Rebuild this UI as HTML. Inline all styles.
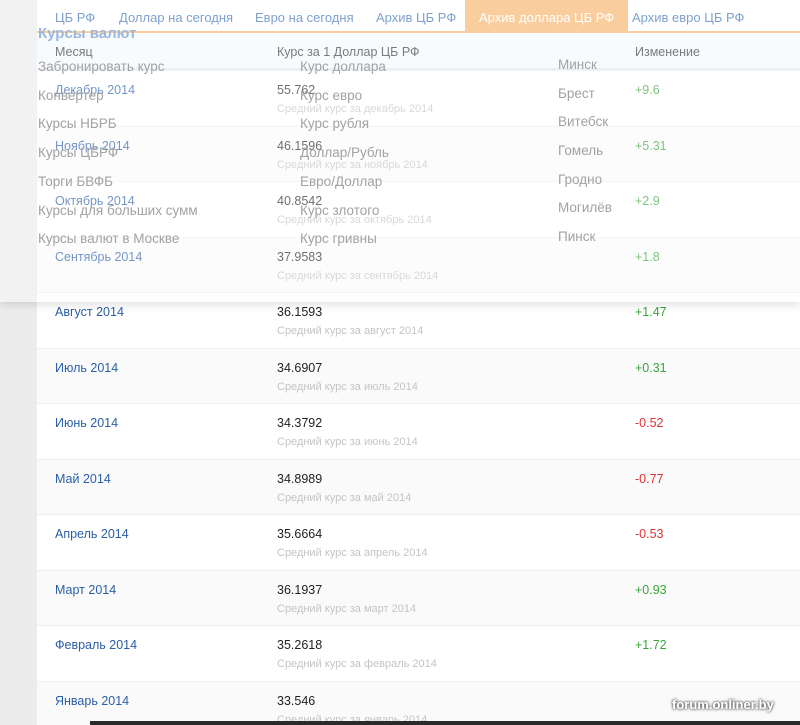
<!DOCTYPE html>
<html><head><meta charset="utf-8"><style>
*{margin:0;padding:0;box-sizing:border-box}
html,body{width:800px;height:725px;overflow:hidden}
body{background:#ececec;font-family:"Liberation Sans","Noto Sans CJK SC",sans-serif;position:relative}
.main{position:absolute;left:37px;top:0;width:763px;height:725px;background:#fff}
.tabs{position:absolute;left:0;top:0;width:763px;height:33px;border-bottom:2px solid #f7b36b}
.tab{position:absolute;top:10px;font-size:13px;color:#3a6db5}
.tab.act{top:0;height:33px;background:#f7b36b;color:#fff;padding:10px 14px 0}
.head{position:absolute;left:0;top:34px;width:763px;height:36px;background:#f5f9fd;border-bottom:2px solid #dde6f2;font-size:12.5px;color:#333}
.head span{position:absolute;top:11px}
.row{position:absolute;left:0;width:763px;height:55.5px;border-top:1px solid #eee;font-size:12.5px}
.row.alt{background:#fafafa}
.m{position:absolute;left:18px;top:12px;color:#2a5ea8}
.v{position:absolute;left:240px;top:12px;color:#222}
.s{position:absolute;left:240px;top:32px;color:#c4c4c4;font-size:11px}
.c{position:absolute;left:598px;top:12px}
.g{color:#3aa53a}.r{color:#d33}
.ov{position:absolute;left:0;top:0;width:800px;height:302px;background:rgba(255,255,255,.35);box-shadow:0 3px 8px rgba(0,0,0,.12)}
.ov div{position:absolute;font-size:13.5px;color:#a2a2a2}
.bar{position:absolute;left:90px;top:721px;width:710px;height:4px;background:#2a2a2a}
.wm{position:absolute;left:672px;top:697px;color:#fff;font-weight:bold;font-size:13px;text-shadow:0 0 3px #555,0 0 2px #555}
</style></head><body>
<div class="main">
<div class="tabs">
<span class="tab" style="left:18px">ЦБ РФ</span>
<span class="tab" style="left:82px">Доллар на сегодня</span>
<span class="tab" style="left:218px">Евро на сегодня</span>
<span class="tab" style="left:339px">Архив ЦБ РФ</span>
<span class="tab act" style="left:428px">Архив доллара ЦБ РФ</span>
<span class="tab" style="left:595px">Архив евро ЦБ РФ</span>
</div>
<div class="head"><span style="left:18px">Месяц</span><span style="left:240px">Курс за 1 Доллар ЦБ РФ</span><span style="left:598px">Изменение</span></div>
<div class="row" style="top:70px"><span class="m">Декабрь 2014</span><span class="v">55.762</span><span class="s">Средний курс за декабрь 2014</span><span class="c g">+9.6</span></div>
<div class="row alt" style="top:125.5px"><span class="m">Ноябрь 2014</span><span class="v">46.1596</span><span class="s">Средний курс за ноябрь 2014</span><span class="c g">+5.31</span></div>
<div class="row" style="top:181px"><span class="m">Октябрь 2014</span><span class="v">40.8542</span><span class="s">Средний курс за октябрь 2014</span><span class="c g">+2.9</span></div>
<div class="row alt" style="top:236.5px"><span class="m">Сентябрь 2014</span><span class="v">37.9583</span><span class="s">Средний курс за сентябрь 2014</span><span class="c g">+1.8</span></div>
<div class="row" style="top:292px"><span class="m">Август 2014</span><span class="v">36.1593</span><span class="s">Средний курс за август 2014</span><span class="c g">+1.47</span></div>
<div class="row alt" style="top:347.5px"><span class="m">Июль 2014</span><span class="v">34.6907</span><span class="s">Средний курс за июль 2014</span><span class="c g">+0.31</span></div>
<div class="row" style="top:403px"><span class="m">Июнь 2014</span><span class="v">34.3792</span><span class="s">Средний курс за июнь 2014</span><span class="c r">-0.52</span></div>
<div class="row alt" style="top:458.5px"><span class="m">Май 2014</span><span class="v">34.8989</span><span class="s">Средний курс за май 2014</span><span class="c r">-0.77</span></div>
<div class="row" style="top:514px"><span class="m">Апрель 2014</span><span class="v">35.6664</span><span class="s">Средний курс за апрель 2014</span><span class="c r">-0.53</span></div>
<div class="row alt" style="top:569.5px"><span class="m">Март 2014</span><span class="v">36.1937</span><span class="s">Средний курс за март 2014</span><span class="c g">+0.93</span></div>
<div class="row" style="top:625px"><span class="m">Февраль 2014</span><span class="v">35.2618</span><span class="s">Средний курс за февраль 2014</span><span class="c g">+1.72</span></div>
<div class="row alt" style="top:680.5px"><span class="m">Январь 2014</span><span class="v">33.546</span><span class="s">Средний курс за январь 2014</span></div>
</div>
<div class="ov">
<div style="left:38px;top:25px;font-size:15px;font-weight:bold;color:#9bb8dc">Курсы валют</div>
<div style="left:38px;top:59px">Забронировать курс</div>
<div style="left:38px;top:88px">Конвертер</div>
<div style="left:38px;top:116px">Курсы НБРБ</div>
<div style="left:38px;top:145px">Курсы ЦБРФ</div>
<div style="left:38px;top:174px">Торги БВФБ</div>
<div style="left:38px;top:203px">Курсы для больших сумм</div>
<div style="left:38px;top:231px">Курсы валют в Москве</div>
<div style="left:300px;top:59px">Курс доллара</div>
<div style="left:300px;top:88px">Курс евро</div>
<div style="left:300px;top:116px">Курс рубля</div>
<div style="left:300px;top:145px">Доллар/Рубль</div>
<div style="left:300px;top:174px">Евро/Доллар</div>
<div style="left:300px;top:203px">Курс злотого</div>
<div style="left:300px;top:231px">Курс гривны</div>
<div style="left:558px;top:57px">Минск</div>
<div style="left:558px;top:86px">Брест</div>
<div style="left:558px;top:114px">Витебск</div>
<div style="left:558px;top:143px">Гомель</div>
<div style="left:558px;top:172px">Гродно</div>
<div style="left:558px;top:200px">Могилёв</div>
<div style="left:558px;top:229px">Пинск</div>
</div>
<div class="bar"></div>
<div class="wm">forum.onliner.by</div>
</body></html>
